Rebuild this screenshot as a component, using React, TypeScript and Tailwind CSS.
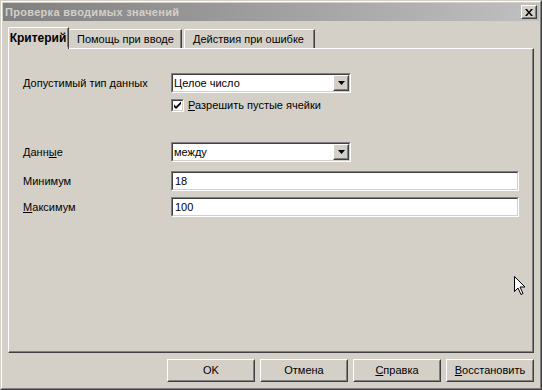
import React from 'react';

const Raised = ({ className = '', children }: { className?: string; children?: React.ReactNode }) => (
  <div className={`border border-t-white border-l-white border-b-[#404040] border-r-[#404040] ${className}`}>
    <div className="w-full h-full border border-t-[#d4d0c8] border-l-[#d4d0c8] border-b-[#808080] border-r-[#808080] flex items-center justify-center">
      {children}
    </div>
  </div>
);

const Sunken = ({ className = '', children }: { className?: string; children?: React.ReactNode }) => (
  <div className={`border border-t-[#808080] border-l-[#808080] border-b-white border-r-white ${className}`}>
    <div className="w-full h-full border border-t-[#404040] border-l-[#404040] border-b-[#d4d0c8] border-r-[#d4d0c8] bg-white flex items-center">
      {children}
    </div>
  </div>
);

const Combo = ({ value }: { value: string }) => (
  <Sunken className="w-[180px] h-[20px]">
    <span className="flex-1 pl-[1px] text-black">{value}</span>
    <Raised className="w-[16px] h-[16px] bg-[#d4d0c8]">
      <svg width="7" height="4" viewBox="0 0 7 4">
        <path d="M0 0h7L3.5 4z" fill="#000" />
      </svg>
    </Raised>
  </Sunken>
);

const Field = ({ value }: { value: string }) => (
  <Sunken className="w-[348px] h-[20px]">
    <span className="pl-[2px] text-black">{value}</span>
  </Sunken>
);

const Button = ({ children }: { children: React.ReactNode }) => (
  <Raised className="w-[88px] h-[23px] bg-[#d4d0c8]">
    <span className="text-black">{children}</span>
  </Raised>
);

export default function App() {
  return (
    <div className="relative w-[542px] h-[390px] bg-[#d4d0c8] font-['Liberation_Sans',Arial,sans-serif] text-[11px] leading-none text-black select-none">
      <div className="w-full h-full border border-t-[#d4d0c8] border-l-[#d4d0c8] border-b-[#404040] border-r-[#404040]">
        <div className="w-full h-full border border-t-white border-l-white border-b-[#808080] border-r-[#808080] p-px flex flex-col">
          {/* title bar */}
          <div className="h-[18px] bg-linear-to-r from-[#808080] to-[#c0c0c0] flex items-center justify-between pl-[2px] pr-[2px]">
            <span className="font-bold text-[#d4d0c8] text-[11px] tracking-[0.3px]">Проверка вводимых значений</span>
            <Raised className="w-[16px] h-[14px] bg-[#d4d0c8]">
              <svg width="8" height="7" viewBox="0 0 8 7">
                <path d="M0 0h2l2 2.5L6 0h2L5 3.5 8 7H6L4 4.5 2 7H0l3-3.5z" fill="#000" />
              </svg>
            </Raised>
          </div>

          <div className="flex-1 flex flex-col px-[5px]">
            {/* tabs */}
            <div className="flex items-end h-[27px] pt-[6px] relative z-10">
              <div className="w-[61px] h-[22px] -mb-px bg-[#d4d0c8] border-t border-l border-t-white border-l-white rounded-tl-[2px] border-r border-r-[#404040] flex items-center justify-center font-bold pb-[2px]">
                <div className="w-full h-full border-r border-r-[#808080] flex items-center justify-center text-[12px]">Критерий</div>
              </div>
              <div className="w-[113px] h-[19px] bg-[#d4d0c8] border-t border-t-white rounded-tl-[2px] border-r border-r-[#404040] flex items-center">
                <div className="w-full h-full border-r border-r-[#808080] flex items-center pl-[8px]">Помощь при вводе</div>
              </div>
              <div className="ml-[2px] w-[131px] h-[19px] bg-[#d4d0c8] border-t border-l border-t-white border-l-white rounded-tl-[2px] border-r border-r-[#404040] flex items-center">
                <div className="w-full h-full border-r border-r-[#808080] flex items-center pl-[8px]">Действия при ошибке</div>
              </div>
            </div>

            {/* panel */}
            <div className="h-[305px] border border-t-white border-l-white border-b-[#404040] border-r-[#404040]">
              <div className="w-full h-full border-b border-r border-b-[#808080] border-r-[#808080] pl-[14px] pt-[24px] flex flex-col">
                <div className="flex items-center h-[20px]">
                  <span className="w-[148px]"><u>Д</u>опустимый тип данных</span>
                  <Combo value="Целое число" />
                </div>
                <div className="flex items-center h-[13px] mt-[6px] ml-[148px] gap-[4px]">
                  <Sunken className="w-[13px] h-[13px]">
                    <svg width="9" height="9" viewBox="0 0 9 9" className="mx-auto">
                      <path d="M1 3.5l2 2 5-5v2.5l-5 5-2-2z" fill="#000" />
                    </svg>
                  </Sunken>
                  <span><u>Р</u>азрешить пустые ячейки</span>
                </div>
                <div className="flex items-center h-[20px] mt-[30px]">
                  <span className="w-[148px]">Данн<u>ы</u>е</span>
                  <Combo value="между" />
                </div>
                <div className="flex items-center h-[20px] mt-[9px]">
                  <span className="w-[148px]">Минимум</span>
                  <Field value="18" />
                </div>
                <div className="flex items-center h-[20px] mt-[6px]">
                  <span className="w-[148px]"><u>М</u>аксимум</span>
                  <Field value="100" />
                </div>
              </div>
            </div>

            {/* buttons */}
            <div className="flex justify-end gap-[5px] mt-[6px]">
              <Button>OK</Button>
              <Button>Отмена</Button>
              <Button><u>С</u>правка</Button>
              <Button><u>В</u>осстановить</Button>
            </div>
          </div>
        </div>
      </div>

      {/* mouse pointer */}
      <svg className="absolute left-[514px] top-[276px]" width="12" height="20" viewBox="0 0 12 20">
        <path d="M0.5 0.5v15l3.5-3.5 3 6.5 2-1-3-6.5h5z" fill="#fff" stroke="#000" strokeWidth="1" />
      </svg>
    </div>
  );
}
